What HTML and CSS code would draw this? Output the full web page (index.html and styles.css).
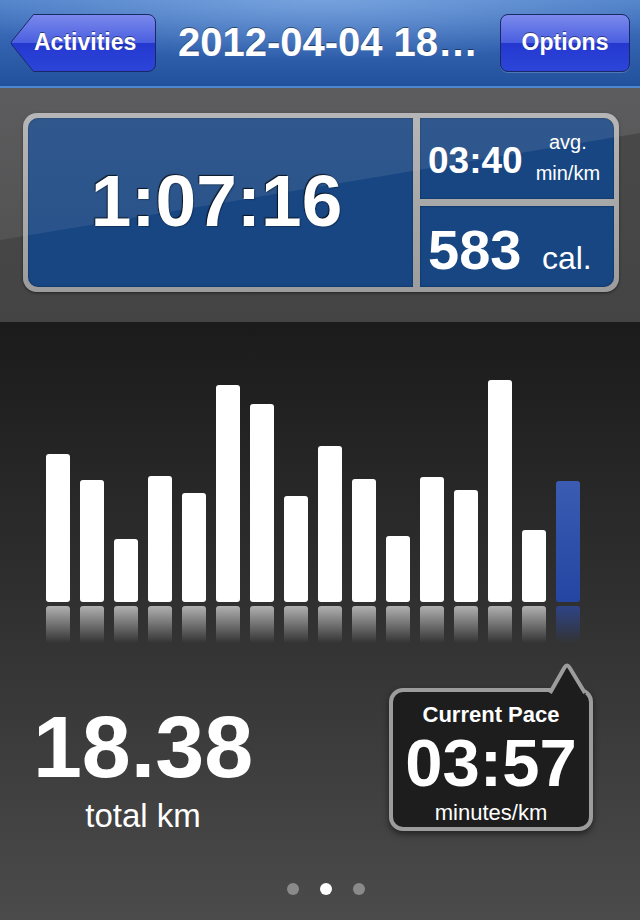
FILE: index.html
```html
<!DOCTYPE html>
<html lang="en">
<head>
    <meta charset="UTF-8">
    <meta name="viewport" content="width=device-width, initial-scale=1.0">
    <title>Activity Details</title>
    <link rel="stylesheet" href="styles.css">
</head>
<body>
    <div class="screen">
        <header class="navbar">
            <a class="back-btn">
                <svg class="back-shape" width="146" height="58" viewBox="0 0 146 58">
                    <defs>
                        <linearGradient id="btnFill" x1="0" y1="0" x2="0" y2="1">
                            <stop offset="0" stop-color="#7b8aec"/>
                            <stop offset="0.5" stop-color="#4a5ee0"/>
                            <stop offset="0.5" stop-color="#2438d0"/>
                            <stop offset="1" stop-color="#2c45d8"/>
                        </linearGradient>
                    </defs>
                    <path d="M23.5 0.5 H138 a7.5 7.5 0 0 1 7.5 7.5 V50 a7.5 7.5 0 0 1 -7.5 7.5 H23.5 L1.6 30.5 Q0.6 29 1.6 27.5 Z" fill="url(#btnFill)" stroke="#1a2866" stroke-width="1"/>
                </svg>
                <span class="btn-label">Activities</span>
            </a>
            <h1 class="nav-title">2012-04-04 18…</h1>
            <a class="nav-btn">Options</a>
        </header>

        <section class="summary">
            <div class="panel">
                <div class="cell cell-time">
                    <span class="time">1:07:16</span>
                </div>
                <div class="cell cell-pace">
                    <span class="mid-num">03:40</span>
                    <span class="units">
                        <span class="unit-line unit-avg">avg.</span>
                        <span class="unit-line">min/km</span>
                    </span>
                </div>
                <div class="cell cell-cal">
                    <span class="line"><span class="cal-num">583</span> <span class="cal-unit">cal.</span></span>
                </div>
            </div>
        </section>

        <section class="track">
            <div class="bars">
                <div class="bar-col"><div class="bar" style="height:148px"></div><div class="bar-reflect"></div></div>
                <div class="bar-col"><div class="bar" style="height:122px"></div><div class="bar-reflect"></div></div>
                <div class="bar-col"><div class="bar" style="height:63px"></div><div class="bar-reflect"></div></div>
                <div class="bar-col"><div class="bar" style="height:126px"></div><div class="bar-reflect"></div></div>
                <div class="bar-col"><div class="bar" style="height:109px"></div><div class="bar-reflect"></div></div>
                <div class="bar-col"><div class="bar" style="height:217px"></div><div class="bar-reflect"></div></div>
                <div class="bar-col"><div class="bar" style="height:198px"></div><div class="bar-reflect"></div></div>
                <div class="bar-col"><div class="bar" style="height:106px"></div><div class="bar-reflect"></div></div>
                <div class="bar-col"><div class="bar" style="height:156px"></div><div class="bar-reflect"></div></div>
                <div class="bar-col"><div class="bar" style="height:123px"></div><div class="bar-reflect"></div></div>
                <div class="bar-col"><div class="bar" style="height:66px"></div><div class="bar-reflect"></div></div>
                <div class="bar-col"><div class="bar" style="height:125px"></div><div class="bar-reflect"></div></div>
                <div class="bar-col"><div class="bar" style="height:112px"></div><div class="bar-reflect"></div></div>
                <div class="bar-col"><div class="bar" style="height:222px"></div><div class="bar-reflect"></div></div>
                <div class="bar-col"><div class="bar" style="height:72px"></div><div class="bar-reflect"></div></div>
                <div class="bar-col current"><div class="bar" style="height:121px"></div><div class="bar-reflect"></div></div>
            </div>

            <div class="stats-row">
                <div class="distance">
                    <div class="distance-num">18.38</div>
                    <div class="distance-label">total km</div>
                </div>
                <div class="pace-bubble">
                    <svg class="bubble-tail" width="40" height="32" viewBox="0 0 40 32">
                        <path d="M1 32 L16.5 5.5 Q19 1.5 21.5 5.5 L38 32 Z" fill="#1d1d1e"/>
                        <path d="M2 31 L16.5 5.5 Q19 1.5 21.5 5.5 L37 31" fill="none" stroke="#9c9c9c" stroke-width="4" stroke-linejoin="round"/>
                    </svg>
                    <div class="pace-title">Current Pace</div>
                    <div class="pace-num">03:57</div>
                    <div class="pace-unit">minutes/km</div>
                </div>
            </div>

            <div class="dots">
                <span class="dot"></span>
                <span class="dot active"></span>
                <span class="dot"></span>
            </div>
        </section>
    </div>
</body>
</html>
```

FILE: styles.css
```css
* {
    margin: 0;
    padding: 0;
    box-sizing: border-box;
}

body {
    font-family: 'Liberation Sans', Arial, Helvetica, sans-serif;
    background: #1b1b1b;
    color: #fff;
    overflow: hidden;
}

.screen {
    width: 640px;
    height: 920px;
    overflow: hidden;
}

/* navigation bar */
.navbar {
    height: 88px;
    display: flex;
    align-items: center;
    padding: 0 10px 1px 10px;
    background:
        radial-gradient(ellipse 60% 70% at 50% 0, rgba(150, 190, 240, 0.55), rgba(150, 190, 240, 0) 100%),
        linear-gradient(#4f80c8 0%, #3565b2 45%, #21509c 100%);
    border-bottom: 2px solid #4f86d2;
}

.back-btn {
    position: relative;
    width: 146px;
    height: 58px;
    display: flex;
    align-items: center;
    flex-shrink: 0;
}

.back-shape {
    position: absolute;
    left: 0;
    top: 0;
}

.btn-label {
    position: relative;
    padding-left: 24px;
    font-size: 23px;
    font-weight: bold;
    text-shadow: 0 -1px 0 rgba(0, 0, 0, 0.45);
}

.nav-title {
    flex: 1;
    text-align: center;
    font-size: 40px;
    font-weight: bold;
    white-space: nowrap;
    text-shadow: 0 -1px 0 rgba(0, 0, 0, 0.45);
}

.nav-btn {
    width: 130px;
    height: 58px;
    flex-shrink: 0;
    display: flex;
    align-items: center;
    justify-content: center;
    font-size: 23px;
    font-weight: bold;
    text-shadow: 0 -1px 0 rgba(0, 0, 0, 0.45);
    border: 1px solid #1a2866;
    border-radius: 8px;
    background: linear-gradient(#7b8aec 0%, #4a5ee0 50%, #2438d0 50%, #2c45d8 100%);
    box-shadow: 0 1px 0 rgba(255, 255, 255, 0.2);
}

/* summary panel */
.summary {
    position: relative;
    height: 234px;
    padding: 25px 0 0 23px;
    background: linear-gradient(#4a4a4a, #444);
}

.summary::before {
    content: '';
    position: absolute;
    left: 0;
    top: 0;
    right: 0;
    bottom: 0;
    z-index: 1;
    background: linear-gradient(rgba(190, 190, 200, 0.16), rgba(190, 190, 200, 0.08));
    clip-path: polygon(0 0, 100% 0, 100% 45px, 0 152px);
    pointer-events: none;
}

.panel {
    display: grid;
    grid-template-columns: 385px 194px;
    grid-template-rows: 81px 81px;
    gap: 7px;
    padding: 5px;
    width: fit-content;
    background: linear-gradient(#b4b4b4, #9c9c9c);
    border-radius: 14px;
    box-shadow: 0 1px 3px rgba(0, 0, 0, 0.5);
}

.cell {
    background: #174683;
    display: flex;
    align-items: center;
    box-shadow: inset 0 0 2px rgba(0, 0, 0, 0.5);
}

.cell-time {
    grid-row: 1 / span 2;
    justify-content: center;
    padding: 0 8px 4px 0;
    border-radius: 10px 0 0 10px;
}

.cell-pace {
    border-radius: 0 10px 0 0;
    padding-left: 8px;
}

.cell-cal {
    border-radius: 0 0 10px 0;
    padding-left: 8px;
}

.time {
    position: relative;
    z-index: 2;
    font-size: 73px;
    font-weight: bold;
    line-height: 1;
    text-shadow: -1px -1px 1px rgba(0, 0, 0, 0.75), 1px 1px 1px rgba(0, 0, 0, 0.3);
}

.mid-num {
    position: relative;
    z-index: 2;
    font-size: 37px;
    font-weight: bold;
    line-height: 1;
    margin-top: 4px;
}

.units {
    position: relative;
    z-index: 2;
    display: flex;
    flex-direction: column;
    align-items: center;
    margin-left: 13px;
    margin-bottom: 2px;
    font-size: 20px;
    line-height: 20px;
}

.unit-avg {
    margin-bottom: 11px;
}

.line {
    position: relative;
    z-index: 2;
    line-height: 1;
    margin-top: 6px;
}

.cal-num {
    font-size: 56px;
    font-weight: bold;
}

.cal-unit {
    font-size: 32px;
    margin-left: 16px;
}

/* splits chart */
.track {
    height: 598px;
    padding-top: 40px;
    background: linear-gradient(#1b1b1b 0%, #2f2f2f 45%, #4b4b4b 100%);
}

.bars {
    height: 281px;
    display: flex;
    align-items: flex-end;
    gap: 10px;
    padding-left: 46px;
}

.bar-col {
    width: 24px;
    display: flex;
    flex-direction: column;
}

.bar {
    background: #fff;
    border-radius: 3px;
}

.bar-reflect {
    height: 37px;
    margin-top: 4px;
    border-radius: 3px 3px 0 0;
    background: linear-gradient(rgba(255, 255, 255, 0.62), rgba(255, 255, 255, 0));
}

.current .bar {
    background: linear-gradient(#3b5cb2, #2445a2);
}

.current .bar-reflect {
    background: linear-gradient(rgba(45, 75, 165, 0.75), rgba(45, 75, 165, 0));
}

/* totals */
.stats-row {
    display: flex;
    align-items: flex-start;
    margin-top: 45px;
    padding: 0 47px 0 18px;
}

.distance {
    width: 250px;
    margin-top: 15px;
    text-align: center;
}

.distance-num {
    font-size: 88px;
    font-weight: bold;
    line-height: 1;
}

.distance-label {
    margin-top: 8px;
    font-size: 33px;
    line-height: 1;
}

.pace-bubble {
    position: relative;
    margin-left: auto;
    width: 204px;
    padding: 12px 0 3px;
    text-align: center;
    background: #1d1d1e;
    border: 4px solid #9c9c9c;
    border-radius: 14px;
    box-shadow: 0 3px 6px rgba(0, 0, 0, 0.5);
}

.bubble-tail {
    position: absolute;
    top: -30px;
    left: 155px;
}

.pace-title {
    font-size: 22px;
    font-weight: bold;
    line-height: 1;
}

.pace-num {
    margin-top: 3px;
    font-size: 67px;
    font-weight: bold;
    line-height: 1;
}

.pace-unit {
    margin-top: 6px;
    font-size: 22px;
    line-height: 1;
}

.dots {
    display: flex;
    justify-content: center;
    gap: 21px;
    margin-top: 51px;
    padding-left: 12px;
}

.dot {
    width: 12px;
    height: 12px;
    border-radius: 50%;
    background: #8a8a8a;
}

.dot.active {
    background: #fff;
}
```
